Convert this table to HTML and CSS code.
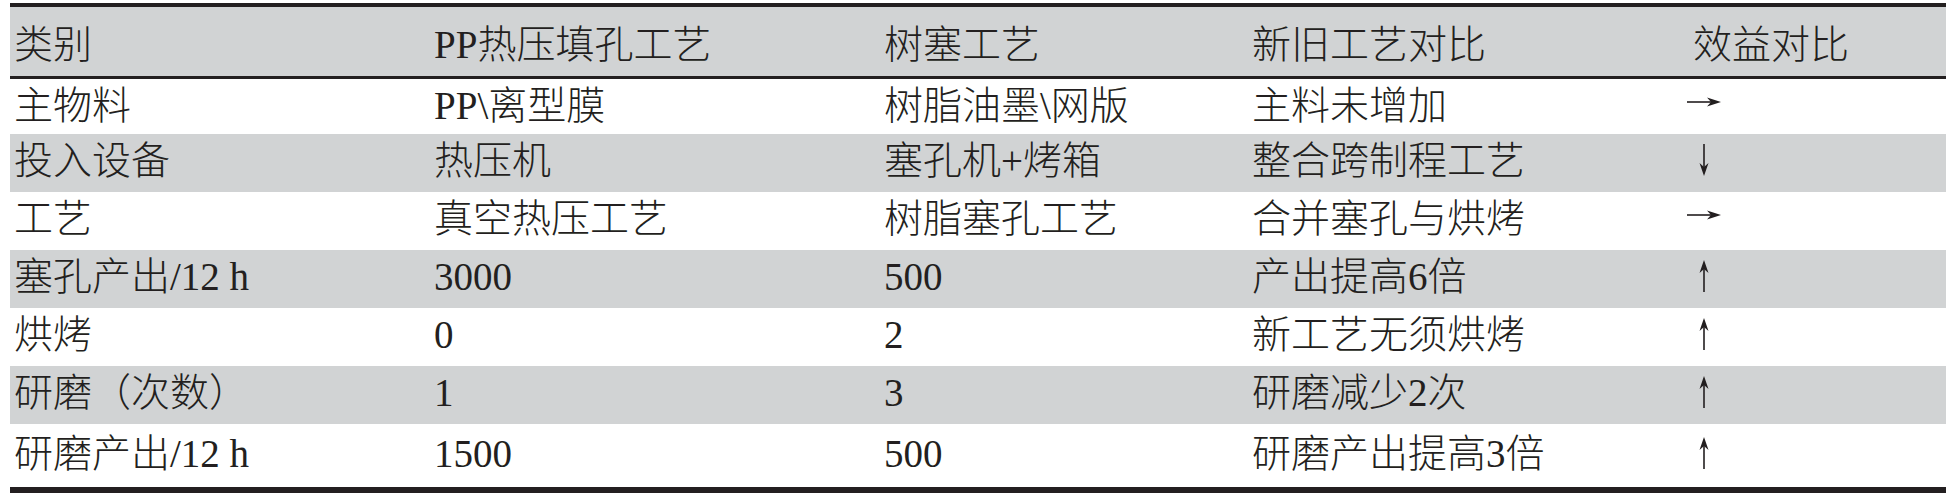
FILE: index.html
```html
<!DOCTYPE html>
<html lang="zh">
<head>
<meta charset="utf-8">
<title>工艺对比</title>
<link rel="stylesheet" href="styles.css">
</head>
<body>
<div class="table">
  <div class="row head">
    <div class="cell">类别</div>
    <div class="cell">PP热压填孔工艺</div>
    <div class="cell">树塞工艺</div>
    <div class="cell">新旧工艺对比</div>
    <div class="cell">效益对比</div>
  </div>
  <div class="row first">
    <div class="cell">主物料</div>
    <div class="cell">PP\离型膜</div>
    <div class="cell">树脂油墨\网版</div>
    <div class="cell">主料未增加</div>
    <div class="cell"><svg class="arr-r" width="34" height="10" viewBox="0 0 34 10" aria-label="→"><line x1="0" y1="5" x2="27" y2="5" stroke="#231f20" stroke-width="1.6"/><polygon points="20,0.5 34,5 20,9.5 24,5" fill="#231f20"/></svg></div>
  </div>
  <div class="row alt">
    <div class="cell">投入设备</div>
    <div class="cell">热压机</div>
    <div class="cell">塞孔机+烤箱</div>
    <div class="cell">整合跨制程工艺</div>
    <div class="cell"><svg class="arr-v" width="10" height="32" viewBox="0 0 10 32" aria-label="↓"><line x1="5" y1="0" x2="5" y2="25" stroke="#231f20" stroke-width="1.6"/><polygon points="0.5,19 5,32 9.5,19 5,23" fill="#231f20"/></svg></div>
  </div>
  <div class="row">
    <div class="cell">工艺</div>
    <div class="cell">真空热压工艺</div>
    <div class="cell">树脂塞孔工艺</div>
    <div class="cell">合并塞孔与烘烤</div>
    <div class="cell"><svg class="arr-r" width="34" height="10" viewBox="0 0 34 10" aria-label="→"><line x1="0" y1="5" x2="27" y2="5" stroke="#231f20" stroke-width="1.6"/><polygon points="20,0.5 34,5 20,9.5 24,5" fill="#231f20"/></svg></div>
  </div>
  <div class="row alt">
    <div class="cell">塞孔产出/12 h</div>
    <div class="cell">3000</div>
    <div class="cell">500</div>
    <div class="cell">产出提高6倍</div>
    <div class="cell"><svg class="arr-v" width="10" height="32" viewBox="0 0 10 32" aria-label="↑"><line x1="5" y1="7" x2="5" y2="32" stroke="#231f20" stroke-width="1.6"/><polygon points="0.5,13 5,0 9.5,13 5,9" fill="#231f20"/></svg></div>
  </div>
  <div class="row">
    <div class="cell">烘烤</div>
    <div class="cell">0</div>
    <div class="cell">2</div>
    <div class="cell">新工艺无须烘烤</div>
    <div class="cell"><svg class="arr-v" width="10" height="32" viewBox="0 0 10 32" aria-label="↑"><line x1="5" y1="7" x2="5" y2="32" stroke="#231f20" stroke-width="1.6"/><polygon points="0.5,13 5,0 9.5,13 5,9" fill="#231f20"/></svg></div>
  </div>
  <div class="row alt">
    <div class="cell">研磨（次数）</div>
    <div class="cell">1</div>
    <div class="cell">3</div>
    <div class="cell">研磨减少2次</div>
    <div class="cell"><svg class="arr-v" width="10" height="32" viewBox="0 0 10 32" aria-label="↑"><line x1="5" y1="7" x2="5" y2="32" stroke="#231f20" stroke-width="1.6"/><polygon points="0.5,13 5,0 9.5,13 5,9" fill="#231f20"/></svg></div>
  </div>
  <div class="row last">
    <div class="cell">研磨产出/12 h</div>
    <div class="cell">1500</div>
    <div class="cell">500</div>
    <div class="cell">研磨产出提高3倍</div>
    <div class="cell"><svg class="arr-v" width="10" height="32" viewBox="0 0 10 32" aria-label="↑"><line x1="5" y1="7" x2="5" y2="32" stroke="#231f20" stroke-width="1.6"/><polygon points="0.5,13 5,0 9.5,13 5,9" fill="#231f20"/></svg></div>
  </div>
</div>
</body>
</html>
```

FILE: styles.css
```css
* {
  box-sizing: border-box;
}

html, body {
  margin: 0;
  padding: 0;
  background: #ffffff;
}

body {
  font-family: "Liberation Serif", "Noto Sans CJK SC", serif;
  font-size: 39px;
  font-weight: 300;
  color: #231f20;
}

.table {
  margin: 3px 0 0 10px;
  width: 1936px;
  border-top: 4px solid #231f20;
  border-bottom: 6px solid #231f20;
}

.row {
  display: grid;
  grid-template-columns: 420px 450px 368px 441px 257px;
  align-items: baseline;
  height: 58px;
  padding-top: 7px;
  line-height: 40px;
  white-space: nowrap;
}

.row.head {
  height: 72px;
  padding-top: 18px;
  background: #d1d3d4;
  border-bottom: 3px solid #231f20;
}

.row.first {
  height: 55px;
}

.row.alt {
  background: #d1d3d4;
}

.row.last {
  height: 63px;
  padding-top: 10px;
}

.cell {
  padding-left: 4px;
}

.arr-r {
  vertical-align: 12px;
  margin-left: -6px;
}

.arr-v {
  vertical-align: -2px;
  margin-left: 6px;
}
```
